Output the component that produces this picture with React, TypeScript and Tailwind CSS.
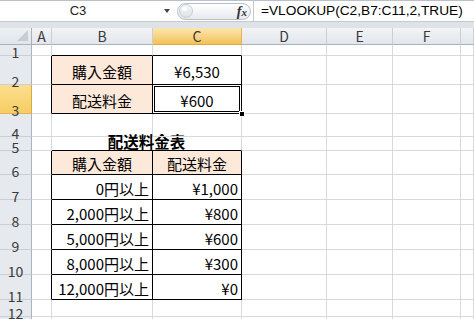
type Row = {
  n: number;
  b?: string;
  c?: string;
  box?: boolean;
  peachB?: boolean;
  peachC?: boolean;
  center?: boolean;
  sel?: boolean;
  title?: string;
  above?: boolean;
};

const rows: Row[] = [
  { n: 1, above: true },
  { n: 2, b: "購入金額", c: "¥6,530", box: true, peachB: true, center: true },
  { n: 3, b: "配送料金", c: "¥600", box: true, peachB: true, center: true, sel: true },
  { n: 4 },
  { n: 5, title: "配送料金表", above: true },
  { n: 6, b: "購入金額", c: "配送料金", box: true, peachB: true, peachC: true, center: true },
  { n: 7, b: "0円以上", c: "¥1,000", box: true },
  { n: 8, b: "2,000円以上", c: "¥800", box: true },
  { n: 9, b: "5,000円以上", c: "¥600", box: true },
  { n: 10, b: "8,000円以上", c: "¥300", box: true },
  { n: 11, b: "12,000円以上", c: "¥0", box: true },
  { n: 12 },
  { n: 13 },
];

const colLetters = ["A", "B", "C", "D", "E", "F", ""];

function FormulaBar() {
  return (
    <div className="h-[28px] bg-[#dfe3e8] border-t border-[#b9c0c9]">
      <div className="h-[21px] bg-white flex items-stretch border-b border-[#c3c9d1]">
        {/* name box */}
        <div className="w-[156px] flex items-center justify-center text-[13px] text-[#222] font-['Liberation_Sans',sans-serif]">
          C3
        </div>
        <div className="w-[21px] flex items-center justify-center">
          <div className="w-0 h-0 border-l-[3.5px] border-r-[3.5px] border-t-[4px] border-l-transparent border-r-transparent border-t-[#444]" />
        </div>
        {/* pill with fx */}
        <div className="w-[75px] flex items-center">
          <div className="relative w-[74px] h-[17px] rounded-full border border-[#b7bec8] bg-linear-to-b from-[#ffffff] to-[#e6e9ee] flex items-center">
            <div className="ml-[1px] w-[14px] h-[14px] rounded-full border border-[#c8ced6] bg-linear-to-b from-[#f3f5f7] to-[#dfe3e8] flex items-start justify-start">
              <div className="ml-[2px] mt-[2px] w-[5px] h-[4px] rounded-full bg-white" />
            </div>
            <span className="absolute right-[3px] top-[0px] font-['Liberation_Serif',serif] italic font-bold text-[14px] leading-[16px] text-[#333]">
              f<span className="text-[11px]">x</span>
            </span>
          </div>
        </div>
        {/* formula input */}
        <div className="flex-1 ml-[1px] border-l border-[#c3c9d1] flex items-center pl-[7px] text-[13.7px] text-black font-['Liberation_Sans',sans-serif] whitespace-nowrap overflow-hidden">
          =VLOOKUP(C2,B7:C11,2,TRUE)
        </div>
      </div>
    </div>
  );
}

function HeaderRow() {
  return (
    <>
      <div className="relative bg-linear-to-b from-[#eef0f3] to-[#e1e5ea] border-r border-b border-[#a9b2bd]">
        <svg className="absolute right-[3px] bottom-[3px]" width="11" height="11" viewBox="0 0 11 11">
          <polygon points="11,0 11,11 0,11" fill="#c8cdd4" />
        </svg>
      </div>
      {colLetters.map((l, i) =>
        l === "C" ? (
          <div
            key={i}
            className="flex items-end justify-center pb-[1px] leading-none text-[14px] text-[#3a3a3a] bg-linear-to-b from-[#fbe6ae] to-[#f4c256] border-r border-b border-r-[#e2b359] border-b-[#e0a93f]"
          >
            {l}
          </div>
        ) : (
          <div
            key={i}
            className="flex items-end justify-center pb-[1px] leading-none text-[14px] text-[#3a3a3a] bg-linear-to-b from-[#f2f4f6] to-[#e2e6eb] border-r border-b border-r-[#c9cfd7] border-b-[#a9b2bd]"
          >
            {l}
          </div>
        )
      )}
    </>
  );
}

function SheetRow({ r }: { r: Row }) {
  // row 13 is cut off at the bottom edge of the window, so its number is not shown
  const label = r.n === 13 ? "" : r.n;
  const rowHead =
    r.n === 3 ? (
      <div className="flex items-end justify-center leading-[10px] text-[14px] text-[#3a3a3a] bg-linear-to-b from-[#fbdf8e] to-[#f7cd62] border-r border-b border-r-[#d9a842] border-b-[#e2b359]">
        <span className="relative top-[2px]">{label}</span>
      </div>
    ) : (
      <div className="flex items-end justify-center leading-[10px] text-[14px] text-[#3a3a3a] bg-[#e6e9ed] border-r border-b border-r-[#a9b2bd] border-b-[#c9cfd7]">
        <span className="relative top-[2px]">{label}</span>
      </div>
    );

  const aCell = (
    <div
      className={`border-b border-b-[#d9d9d9] border-r ${
        r.box ? "border-r-black" : "border-r-[#d9d9d9]"
      }`}
    />
  );

  const bottomB = r.box || r.above ? "border-b-black" : "border-b-[#d9d9d9]";
  const rightBC = r.box ? "border-r-black" : "border-r-[#d9d9d9]";
  const align = r.center ? "justify-center" : "justify-end pr-[3px]";

  let bc;
  if (r.title) {
    bc = (
      <div className="col-span-2 flex items-end justify-center pb-[1px] leading-[16px] text-[15.5px] font-bold text-black border-r border-b border-r-[#d9d9d9] border-b-black">
        {r.title}
      </div>
    );
  } else {
    bc = (
      <>
        <div
          className={`flex items-center ${align} pt-[3px] leading-[18px] text-[15px] text-black border-r border-b ${rightBC} ${bottomB} ${
            r.peachB ? "bg-[#fde9d9]" : ""
          }`}
        >
          {r.b}
        </div>
        <div
          className={`relative flex items-center ${
            r.center ? "justify-center" : "justify-end pr-[3px]"
          } pt-[3px] leading-[18px] text-[15px] text-black border-r border-b ${rightBC} ${bottomB} ${
            r.peachC ? "bg-[#fde9d9]" : ""
          }`}
        >
          {r.c}
          {r.sel && (
            <>
              <div className="absolute top-[1px] left-[1px] right-[1px] bottom-[1px] border-[1.5px] border-black" />
              <div className="absolute z-10 right-[-4px] bottom-[-4px] w-[6px] h-[6px] bg-black border border-white" />
            </>
          )}
        </div>
      </>
    );
  }

  return (
    <>
      {rowHead}
      {aCell}
      {bc}
      <div className="border-r border-b border-[#d9d9d9]" />
      <div className="border-r border-b border-[#d9d9d9]" />
      <div className="border-r border-b border-[#d9d9d9]" />
      <div className="border-r border-b border-[#d9d9d9]" />
    </>
  );
}

export default function App() {
  return (
    <div className="w-[474px] h-[319px] overflow-hidden bg-white font-['Noto_Sans_CJK_JP',sans-serif]">
      <FormulaBar />
      <div className="grid grid-cols-[32px_20px_101px_89px_85px_66px_68px_1fr] grid-rows-[17px_11px_29px_29px_23px_14px_24px_25px_25px_25px_25px_25px_17px_20px]">
        <HeaderRow />
        {rows.map((r) => (
          <SheetRow key={r.n} r={r} />
        ))}
      </div>
    </div>
  );
}
